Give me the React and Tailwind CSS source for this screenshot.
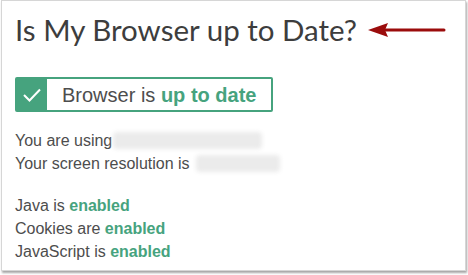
import React from "react";

export default function App() {
  return (
    <div className="w-[468px] h-[275px] bg-white">
      <div className="ml-[1px] w-[465px] h-[271px] border border-[#d6d6d6] bg-white shadow-[1px_2px_2px_rgba(0,0,0,0.35)] px-[13px]">
        <div className="flex items-center h-[56px] pt-[1px]">
          <h1 className="text-[29.5px] text-[#3d3d3d] font-['Lato',sans-serif] leading-none">
            Is My Browser up to Date?
          </h1>
          <svg width="80" height="16" viewBox="0 0 80 16" className="ml-[10px]">
            <polygon points="1,8 21,1 18,8 21,15" fill="#9b0c0c" />
            <line x1="18" y1="8" x2="77" y2="8" stroke="#9b0c0c" strokeWidth="3" strokeLinecap="round" />
          </svg>
        </div>
        <div className="mt-[20px] flex w-[258px] h-[35px] border-2 border-[#46a37e] rounded-[2px]">
          <div className="w-[30px] bg-[#46a37e] flex items-center justify-center">
            <svg width="20" height="16" viewBox="0 0 20 16">
              <polyline points="2,8 7.5,13.5 18,2.5" fill="none" stroke="white" strokeWidth="2" />
            </svg>
          </div>
          <div className="flex-1 flex items-center pl-[15px] text-[20px] text-[#4d4d4d] font-['Liberation_Sans',sans-serif]">
            Browser is&nbsp;<span className="font-bold text-[#46a37e]">up to date</span>
          </div>
        </div>
        <div className="mt-[17px] text-[16px] leading-[23px] text-[#4d4d4d] font-['Liberation_Sans',sans-serif]">
          <div className="flex items-center">
            You are using
            <span className="ml-[1px] inline-block w-[149px] h-[17px] bg-[#ebebeb] blur-[2px] rounded-sm"></span>
          </div>
          <div className="flex items-center">
            Your screen resolution is
            <span className="ml-[6px] inline-block w-[84px] h-[17px] bg-[#ebebeb] blur-[2px] rounded-sm"></span>
          </div>
          <div className="mt-[19px]">
            Java is <span className="font-bold text-[#46a37e]">enabled</span>
          </div>
          <div>
            Cookies are <span className="font-bold text-[#46a37e]">enabled</span>
          </div>
          <div>
            JavaScript is <span className="font-bold text-[#46a37e]">enabled</span>
          </div>
        </div>
      </div>
    </div>
  );
}
